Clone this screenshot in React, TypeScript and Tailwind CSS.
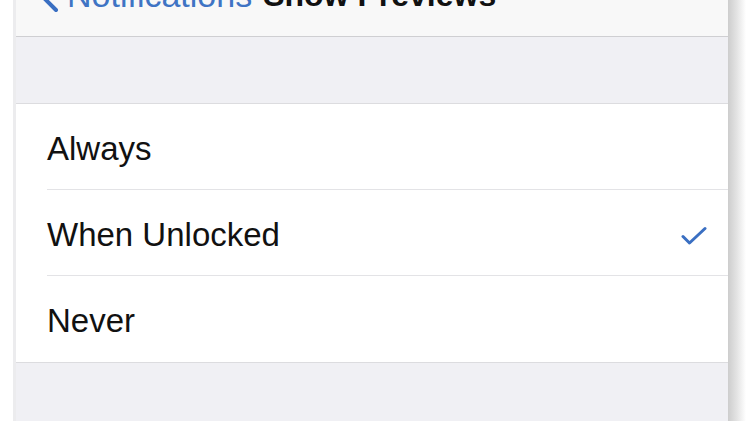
const options = [
  { label: "Always", checked: false },
  { label: "When Unlocked", checked: true },
  { label: "Never", checked: false },
];

function Check() {
  return (
    <svg width="26" height="20" viewBox="0 0 26 20" fill="none" className="mt-[7px]">
      <path
        d="M2 10.5 L8.5 17 L24 2.5"
        stroke="#3a6fc2"
        strokeWidth="3"
        strokeLinecap="round"
        strokeLinejoin="round"
      />
    </svg>
  );
}

export default function App() {
  return (
    <div className="flex h-[421px] w-[750px] overflow-hidden bg-white font-['Liberation_Sans',Arial,sans-serif]">
      <div className="w-[13px] bg-white" />
      <div className="w-[3px] bg-[#ececee]" />

      <main className="flex w-[712px] flex-col bg-[#f0f0f4]">
        {/* nav bar, top is cut off */}
        <header className="h-[37px] shrink-0 overflow-hidden border-b border-[#cfcfd2] bg-[#f8f8f8]">
          <div className="mt-[-21px] flex items-start text-[32px] leading-[32px]">
            <svg width="22" height="36" viewBox="0 0 22 36" className="ml-[21px] mt-[-1px] shrink-0">
              <path
                d="M19 2 L4 17 L19 32"
                stroke="#3a6fc2"
                strokeWidth="4"
                strokeLinecap="round"
                strokeLinejoin="round"
                fill="none"
              />
            </svg>
            <span className="ml-[8px] text-[34px] text-[#3f74c4]">Notifications</span>
            <span className="ml-[11px] font-bold text-[#111]">Show Previews</span>
          </div>
        </header>

        <div className="h-[67px] shrink-0 border-b border-[#dcdcdf]" />

        <ul className="shrink-0 border-b border-[#dcdcdf] bg-white">
          {options.map((o, i) => (
            <li key={o.label} className="pl-[31px]">
              <div
                className={`flex h-[86px] items-center justify-between pr-[21px] ${
                  i < options.length - 1 ? "border-b border-[#e3e3e6]" : ""
                }`}
              >
                <span className="mt-[4px] text-[33px] text-[#111]">{o.label}</span>
                {o.checked && <Check />}
              </div>
            </li>
          ))}
        </ul>

        <div className="flex-1" />
      </main>

      <div className="w-[18px] bg-gradient-to-r from-[#cdcdcd] via-[#e4e4e4] to-white" />
      <div className="flex-1 bg-white" />
    </div>
  );
}
